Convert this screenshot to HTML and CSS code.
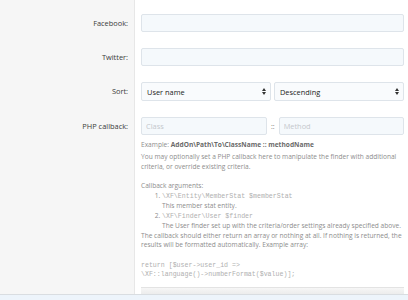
FILE: index.html
```html
<!DOCTYPE html>
<html lang="en">
<head>
  <meta charset="UTF-8" />
  <title>Member stat options</title>
  <link rel="stylesheet" href="styles.css">
</head>
<body>
  <div class="block">
    <div class="form-row first">
      <div class="row-label">Facebook:</div>
      <div class="row-input"><input class="input" type="text" /></div>
    </div>

    <div class="form-row">
      <div class="row-label">Twitter:</div>
      <div class="row-input"><input class="input" type="text" /></div>
    </div>

    <div class="form-row">
      <div class="row-label">Sort:</div>
      <div class="row-input">
        <div class="input-pair">
          <div class="select">
            <span>User name</span>
            <svg class="arrows" width="4" height="7" viewBox="0 0 4 7"><path d="M2 0L4 3H0z M2 7L0 4h4z" fill="#333"/></svg>
          </div>
          <div class="select">
            <span>Descending</span>
            <svg class="arrows" width="4" height="7" viewBox="0 0 4 7"><path d="M2 0L4 3H0z M2 7L0 4h4z" fill="#333"/></svg>
          </div>
        </div>
      </div>
    </div>

    <div class="form-row">
      <div class="row-label">PHP callback:</div>
      <div class="row-input">
        <div class="input-pair callback">
          <input class="input" type="text" placeholder="Class" />
          <span class="sep">::</span>
          <input class="input" type="text" placeholder="Method" />
        </div>
        <div class="hint">
          <div class="example">Example: <b>AddOn\Path\To\ClassName :: methodName</b></div>
          <p>You may optionally set a PHP callback here to manipulate the finder with additional criteria, or override existing criteria.</p>
          <div>Callback arguments:</div>
          <ol>
            <li><code>\XF\Entity\MemberStat $memberStat</code><br>This member stat entity.</li>
            <li><code>\XF\Finder\User $finder</code><br>The User finder set up with the criteria/order settings already specified above.</li>
          </ol>
          <p>The callback should either return an array or nothing at all. If nothing is returned, the results will be formatted automatically. Example array:</p>
          <p class="code"><code>return [$user-&gt;user_id =&gt;<br>\XF::language()-&gt;numberFormat($value)];</code></p>
        </div>
      </div>
    </div>

    <div class="form-row submit-row">
      <div class="row-label"></div>
      <div class="row-input"><div class="submit-bar"></div></div>
    </div>
  </div>
</body>
</html>
```

FILE: styles.css
```css
* {
  box-sizing: border-box;
}
body {
  margin: 0;
  background: #edf4fb;
  font-family: 'Open Sans', 'Noto Sans', sans-serif;
  color: #2b2b2b;
}
.block {
  background: #fff;
  border-bottom: 1px solid #d9dde1;
}
.form-row {
  display: flex;
}
.row-label {
  width: 135px;
  flex-shrink: 0;
  background: #f6f6f6;
  border-right: 1px solid #e7e7e7;
  text-align: right;
  padding: 8px 6px 8px 0;
  font-size: 7.4px;
  line-height: 18px;
  color: #3a3a3a;
}
.row-input {
  flex: 1;
  min-width: 0;
  padding: 8px 4px 8px 6px;
}
.form-row.first .row-label,
.form-row.first .row-input {
  padding-top: 14px;
}
.input {
  display: block;
  width: 100%;
  height: 18px;
  margin: 0;
  padding: 0 4px;
  border: 1px solid #dee4ea;
  border-radius: 2px;
  background: #f5f9fc;
  font-family: inherit;
  font-size: 7.4px;
  color: #222;
  outline: none;
}
.input::placeholder {
  color: #c4c8cc;
}
.input-pair {
  display: flex;
  align-items: center;
  gap: 3px;
}
.select {
  flex: 1;
  height: 19px;
  display: flex;
  align-items: center;
  justify-content: space-between;
  padding: 0 4px 0 5px;
  border: 1px solid #dee4ea;
  border-radius: 2px;
  background: #f9fbfd;
  font-size: 7.4px;
  color: #222;
}
.callback .input {
  flex: 1;
}
.callback .input:first-child {
  flex: 0 0 126px;
}
.sep {
  font-size: 7px;
  color: #777;
  padding: 0 1px;
}
.hint {
  margin-top: 4.5px;
  font-size: 6.6px;
  line-height: 9.7px;
  color: #8d8d8d;
}
.example {
  margin-bottom: 3px;
}
.example b {
  color: #6a6a6a;
}
.hint p {
  margin: 0 0 9.7px;
}
.hint ol {
  margin: 0;
  padding-left: 21px;
}
.hint li {
  line-height: 9.9px;
}
code {
  font-family: 'Liberation Mono', 'DejaVu Sans Mono', monospace;
  font-size: 6.6px;
  line-height: 1;
  color: #b0b0b0;
}
.hint p.code {
  margin: 0;
}
.submit-row .row-label,
.submit-row .row-input {
  padding-top: 0;
  padding-bottom: 0;
}
.submit-bar {
  height: 7px;
  border-top: 1px solid #e3e3e3;
  background: linear-gradient(#f6f6f6, #ececec);
}
```
